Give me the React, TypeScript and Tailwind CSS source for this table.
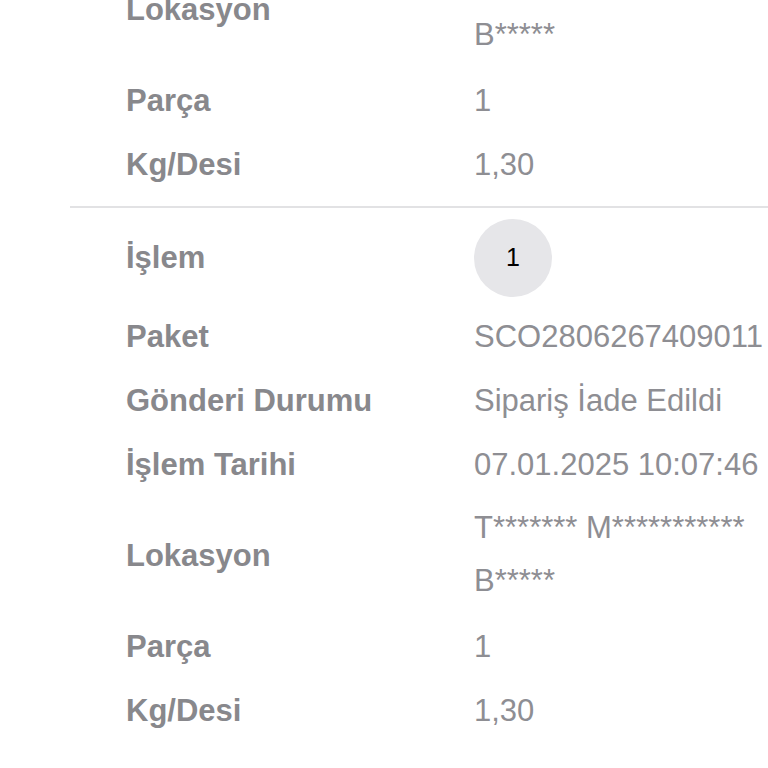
import React from 'react';

type Row = { label: string; value: string | string[]; badge?: boolean };

const prevRows: Row[] = [
  { label: 'Lokasyon', value: ['T******* M***********', 'B*****'] },
  { label: 'Parça', value: '1' },
  { label: 'Kg/Desi', value: '1,30' },
];

const rows: Row[] = [
  { label: 'İşlem', value: '1', badge: true },
  { label: 'Paket', value: 'SCO2806267409011' },
  { label: 'Gönderi Durumu', value: 'Sipariş İade Edildi' },
  { label: 'İşlem Tarihi', value: '07.01.2025 10:07:46' },
  { label: 'Lokasyon', value: ['T******* M***********', 'B*****'] },
  { label: 'Parça', value: '1' },
  { label: 'Kg/Desi', value: '1,30' },
];

function DetailRow({ row }: { row: Row }) {
  const multi = Array.isArray(row.value);
  return (
    <div
      className={
        'flex items-center whitespace-nowrap ' +
        (row.badge ? 'h-[94px]' : multi ? 'h-[118px]' : 'h-[64px]')
      }
    >
      <div className="w-[348px] shrink-0 text-[31px] font-bold text-[#88888c]">{row.label}</div>
      {row.badge ? (
        <div className="flex h-[78px] w-[78px] items-center justify-center rounded-full bg-[#e6e6e9] text-[25px] text-black">
          {row.value}
        </div>
      ) : multi ? (
        <div className="-mt-[5px] flex flex-col text-[31px] leading-[53px] text-[#8e8e93]">
          {(row.value as string[]).map((v, i) => (
            <span key={i}>{v}</span>
          ))}
        </div>
      ) : (
        <div className="text-[31px] text-[#8e8e93]">{row.value}</div>
      )}
    </div>
  );
}

export default function App() {
  return (
    <div className="min-h-[768px] overflow-hidden bg-white pl-[70px] font-['Liberation_Sans',Arial,sans-serif]">
      <div className="-mt-[49px] pb-[9px] pl-[56px]">
        {prevRows.map((r, i) => (
          <DetailRow key={i} row={r} />
        ))}
      </div>
      <div className="border-t-2 border-[#e2e2e4] pt-[3px] pl-[56px]">
        {rows.map((r, i) => (
          <DetailRow key={i} row={r} />
        ))}
      </div>
    </div>
  );
}
